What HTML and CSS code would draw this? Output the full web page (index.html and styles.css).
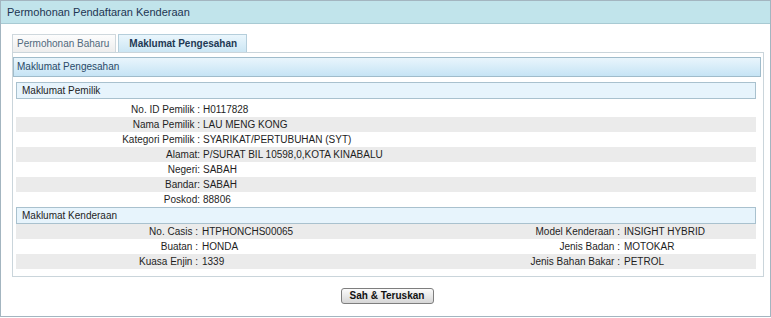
FILE: index.html
```html
<!DOCTYPE html>
<html>
<head>
<meta charset="utf-8">
<title>Permohonan Pendaftaran Kenderaan</title>
<link rel="stylesheet" href="styles.css">
</head>
<body>
<div class="panel">
  <div class="panel-head">Permohonan Pendaftaran Kenderaan</div>
  <div class="panel-body">
    <div class="tabs">
      <div class="tab tab-first">Permohonan Baharu</div>
      <div class="tab tab-active">Maklumat Pengesahan</div>
    </div>
    <div class="tab-content">
      <div class="content-head">Maklumat Pengesahan</div>
      <div class="content-body">
        <div class="section-title">Maklumat Pemilik</div>
        <table class="info info-owner">
          <colgroup><col class="c-label"><col></colgroup>
          <tr><td class="lbl">No. ID Pemilik :</td><td class="val">H0117828</td></tr>
          <tr class="alt"><td class="lbl">Nama Pemilik :</td><td class="val">LAU MENG KONG</td></tr>
          <tr><td class="lbl">Kategori Pemilik :</td><td class="val">SYARIKAT/PERTUBUHAN (SYT)</td></tr>
          <tr class="alt"><td class="lbl">Alamat:</td><td class="val">P/SURAT BIL 10598,0,KOTA KINABALU</td></tr>
          <tr><td class="lbl">Negeri:</td><td class="val">SABAH</td></tr>
          <tr class="alt"><td class="lbl">Bandar:</td><td class="val">SABAH</td></tr>
          <tr><td class="lbl">Poskod:</td><td class="val">88806</td></tr>
        </table>
        <div class="section-title">Maklumat Kenderaan</div>
        <table class="info info-vehicle">
          <colgroup><col class="v-l1"><col class="v-v1"><col class="v-l2"><col></colgroup>
          <tr class="alt"><td class="lbl">No. Casis :</td><td class="val2">HTPHONCHS00065</td><td class="lbl">Model Kenderaan :</td><td class="val2">INSIGHT HYBRID</td></tr>
          <tr><td class="lbl">Buatan :</td><td class="val2">HONDA</td><td class="lbl">Jenis Badan :</td><td class="val2">MOTOKAR</td></tr>
          <tr class="alt"><td class="lbl">Kuasa Enjin :</td><td class="val2">1339</td><td class="lbl">Jenis Bahan Bakar :</td><td class="val2">PETROL</td></tr>
        </table>
      </div>
    </div>
    <div class="actions">
      <button type="button" class="btn">Sah &amp; Teruskan</button>
    </div>
  </div>
</div>
</body>
</html>
```
FILE: styles.css
```css
* { box-sizing: border-box; }

html, body {
  margin: 0;
  padding: 0;
  background: #ffffff;
}

body {
  font-family: "Liberation Sans", Arial, sans-serif;
  font-size: 10px;
  color: #1e1e1e;
}

.panel {
  width: 771px;
  border: 1px solid #a3b5c0;
  background: #ffffff;
}

.panel-head {
  height: 23px;
  line-height: 22px;
  padding-left: 6px;
  font-size: 11px;
  color: #1d3552;
  background: #c1e4eb;
  border-bottom: 1px solid #a8cad3;
}

.panel-body {
  padding: 10px 6px 12px 11px;
}

.tabs {
  display: flex;
  gap: 2px;
  height: 18px;
}

.tab {
  height: 18px;
  line-height: 17px;
  border: 1px solid #cfd8dd;
  border-bottom: none;
  white-space: nowrap;
}

.tab-first {
  padding: 0 6px 0 4px;
  color: #51697c;
  background: linear-gradient(#fdfdfd, #ededed);
}

.tab-active {
  padding: 0 9px 0 10px;
  font-weight: bold;
  color: #1e3954;
  background: linear-gradient(#eaf6fc, #cce6f4);
  border-color: #b5cedb;
}

.tab-content {
  border: 1px solid #cad5db;
  padding: 4px 2px 7px 0;
}

.content-head {
  height: 20px;
  line-height: 18px;
  padding-left: 3px;
  color: #2a4a68;
  background: linear-gradient(#e9f5fc, #c6e4f5);
  border: 1px solid #a0bccb;
}

.content-body {
  padding: 5px 5px 0 3px;
}

.section-title {
  height: 17px;
  line-height: 15px;
  padding-left: 5px;
  color: #1e1e1e;
  background: #e7f4fc;
  border: 1px solid #a9c1ce;
}

.info {
  width: 100%;
  border-collapse: collapse;
  table-layout: fixed;
}

.info-owner {
  margin-top: 3px;
}

.info td {
  height: 15px;
  line-height: 15px;
  padding: 0;
  white-space: nowrap;
  overflow: hidden;
}

.info tr.alt td {
  background: #ebebeb;
}

.c-label { width: 184px; }
.v-l1 { width: 182px; }
.v-v1 { width: 222px; }
.v-l2 { width: 200px; }

.lbl {
  text-align: right;
}

.val {
  padding-left: 3px !important;
}

.val2 {
  padding-left: 4px !important;
}

.actions {
  display: flex;
  justify-content: center;
  padding-top: 11px;
}

.btn {
  width: 93px;
  height: 16px;
  padding: 0;
  margin-right: 2px;
  font-family: "Liberation Sans", Arial, sans-serif;
  font-size: 10px;
  font-weight: bold;
  line-height: 14px;
  color: #111111;
  background: linear-gradient(#fbfbfb, #d6d6d6);
  border: 1px solid #7e7e7e;
  border-radius: 3px;
}
```
